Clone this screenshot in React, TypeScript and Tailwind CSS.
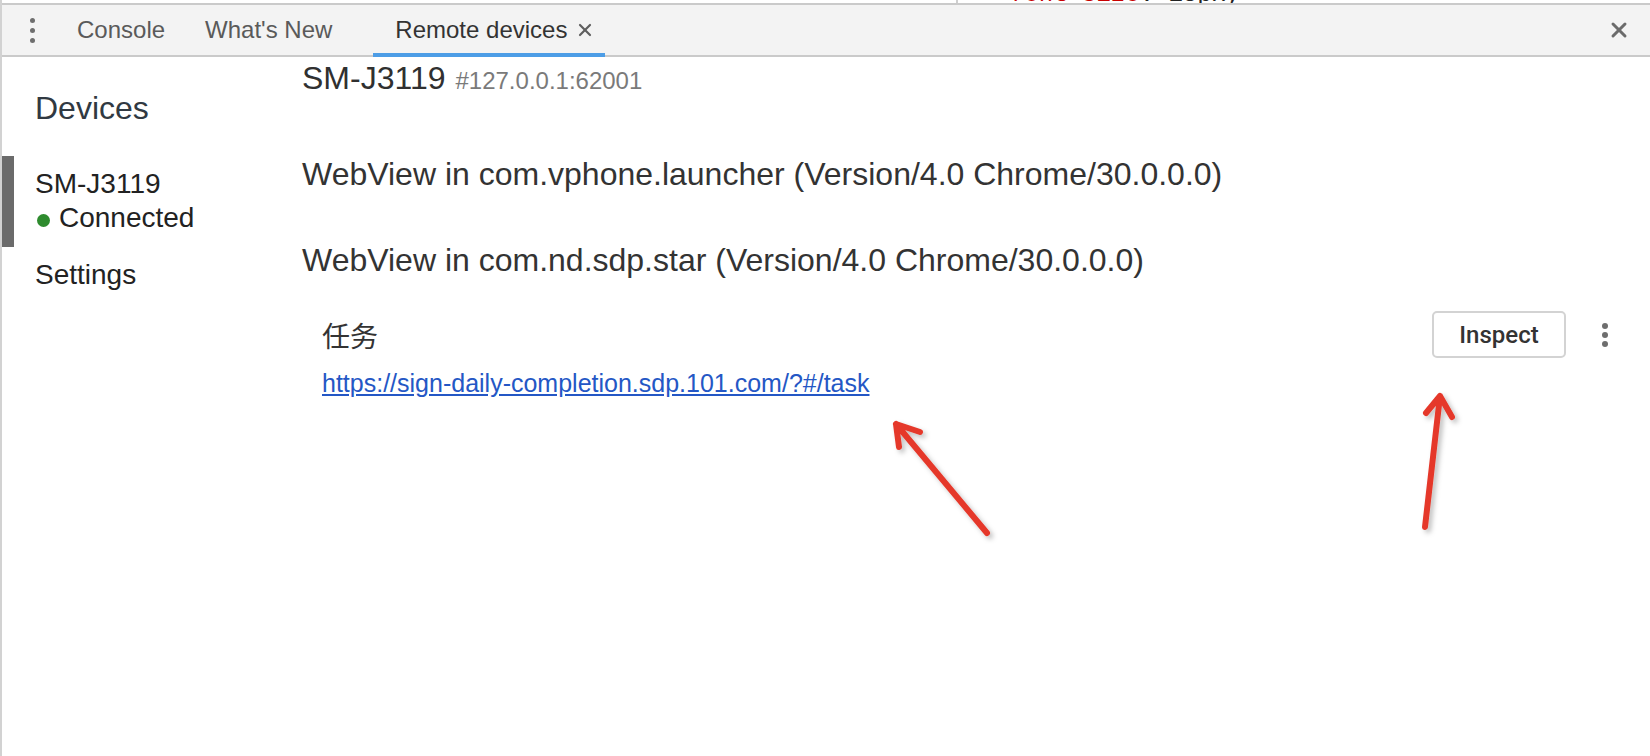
import { X } from 'lucide-react';

const sans = { fontFamily: '"Liberation Sans", Arial, sans-serif' };

function Dots({ size, gap, color }: { size: string; gap: string; color: string }) {
    return (
        <div className={`flex flex-col ${gap}`}>
            <span className={`${size} rounded-full ${color}`} />
            <span className={`${size} rounded-full ${color}`} />
            <span className={`${size} rounded-full ${color}`} />
        </div>
    );
}

function Arrows() {
    return (
        <svg className="pointer-events-none absolute inset-0" width="1650" height="756" viewBox="0 0 1650 756">
            <defs>
                <filter id="sh" x="-20%" y="-20%" width="140%" height="140%">
                    <feDropShadow dx="3" dy="3" stdDeviation="2.5" floodColor="#000" floodOpacity="0.25" />
                </filter>
            </defs>
            <g stroke="#e5392b" strokeWidth="6" strokeLinecap="round" strokeLinejoin="round" fill="none" filter="url(#sh)">
                <path d="M985 533 L894 424 M918 432 L894 424 L897 447" />
                <path d="M1423 527 L1438 396 M1424 413 L1438 396 L1450 417" />
            </g>
        </svg>
    );
}

export default function App() {
    return (
        <div className="relative h-[756px] w-[1650px] overflow-hidden bg-white border-l-2 border-[#d2d2d2]" style={sans}>
            {/* cut-off styles pane above the drawer */}
            <div className="flex h-[3px] overflow-hidden bg-white">
                <div className="w-[954px]" />
                <div className="w-[2px] bg-[#cfcfcf]" />
                <div className="ml-[52px] -mt-[17px] whitespace-pre text-[24px] leading-[24px]" style={{ fontFamily: '"Liberation Mono", monospace' }}>
                    <span className="text-[#c80000]">font-size</span>
                    <span className="text-[#222]">: 18px;</span>
                </div>
            </div>

            {/* drawer toolbar */}
            <div className="relative flex h-[54px] items-center border-t-2 border-b-2 border-[#cacaca] bg-[#f3f3f3]">
                <div className="flex h-full w-[55px] items-center pl-[28px]">
                    <Dots size="h-[5px] w-[5px]" gap="gap-[5px]" color="bg-[#6e6e6e]" />
                </div>
                <div className="px-[20px] text-[24px] text-[#5a5a5a]">Console</div>
                <div className="px-[20px] text-[24px] text-[#5a5a5a]">What's New</div>
                <div className="relative ml-[21px] flex h-full items-center pl-[22px] pr-[10px]">
                    <span className="text-[24px] text-[#333]">Remote devices</span>
                    <X className="ml-[8px] h-[20px] w-[20px] text-[#5f5f5f]" strokeWidth={2.6} />
                    <span className="absolute bottom-[-2px] left-0 right-0 h-[4px] bg-[#4d9de6]" />
                </div>
                <div className="ml-auto mr-[19px] flex items-center">
                    <X className="h-[24px] w-[24px] text-[#6b6b6b]" strokeWidth={3} />
                </div>
            </div>

            {/* body */}
            <div className="flex">
                <div className="w-[268px] shrink-0">
                    <div className="mt-[33px] pl-[33px] text-[32px] leading-[36px] text-[#303942]">Devices</div>
                    <div className="mt-[30px] flex">
                        <div className="w-[12px] bg-[#6b6b6b]" />
                        <div className="pb-[12px] pl-[21px] pt-[11px] text-[28px] leading-[34px] text-[#222]">
                            <div>SM-J3119</div>
                            <div className="flex items-center">
                                <span className="ml-[2px] mr-[9px] mt-[4px] h-[13px] w-[13px] shrink-0 rounded-full bg-[#2e8b2e]" />
                                <span>Connected</span>
                            </div>
                        </div>
                    </div>
                    <div className="pl-[33px] pt-[11px] text-[28px] leading-[34px] text-[#222]">Settings</div>
                </div>

                <div className="flex-1 pl-[32px] pr-[33px]">
                    <div className="mt-[3px] flex items-baseline leading-[36px]">
                        <span className="text-[32px] text-[#303030]">SM-J3119</span>
                        <span className="ml-[10px] text-[24px] text-[#7a7a7a]">#127.0.0.1:62001</span>
                    </div>
                    <div className="mt-[57px] text-[32px] leading-[36px] text-[#333]">
                        WebView in com.vphone.launcher (Version/4.0 Chrome/30.0.0.0)
                    </div>
                    <div className="mt-[50px] text-[32px] leading-[36px] text-[#333]">
                        WebView in com.nd.sdp.star (Version/4.0 Chrome/30.0.0.0)
                    </div>
                    <div className="mt-[33px] flex items-start">
                        <div className="flex-1 pl-[20px] pt-[9px]">
                            <div
                                className="text-[28px] leading-[36px] text-[#333]"
                                style={{ fontFamily: '"Liberation Sans", "Noto Sans CJK SC", sans-serif' }}
                            >
                                任务
                            </div>
                            <a href="#" className="mt-[12px] block text-[25px] leading-[30px] text-[#2457c5] underline">
                                https://sign-daily-completion.sdp.101.com/?#/task
                            </a>
                        </div>
                        <button
                            className="mr-[27px] h-[47px] w-[134px] rounded-[5px] border-2 border-[#d3d3d3] bg-white text-[24px] font-medium text-[#333]"
                            style={{ fontFamily: 'Roboto, "Liberation Sans", sans-serif' }}
                        >
                            Inspect
                        </button>
                        <div className="mt-[12px] flex w-[24px] justify-center">
                            <Dots size="h-[6px] w-[6px]" gap="gap-[3px]" color="bg-[#6e6e6e]" />
                        </div>
                    </div>
                </div>
            </div>

            <Arrows />
        </div>
    );
}
